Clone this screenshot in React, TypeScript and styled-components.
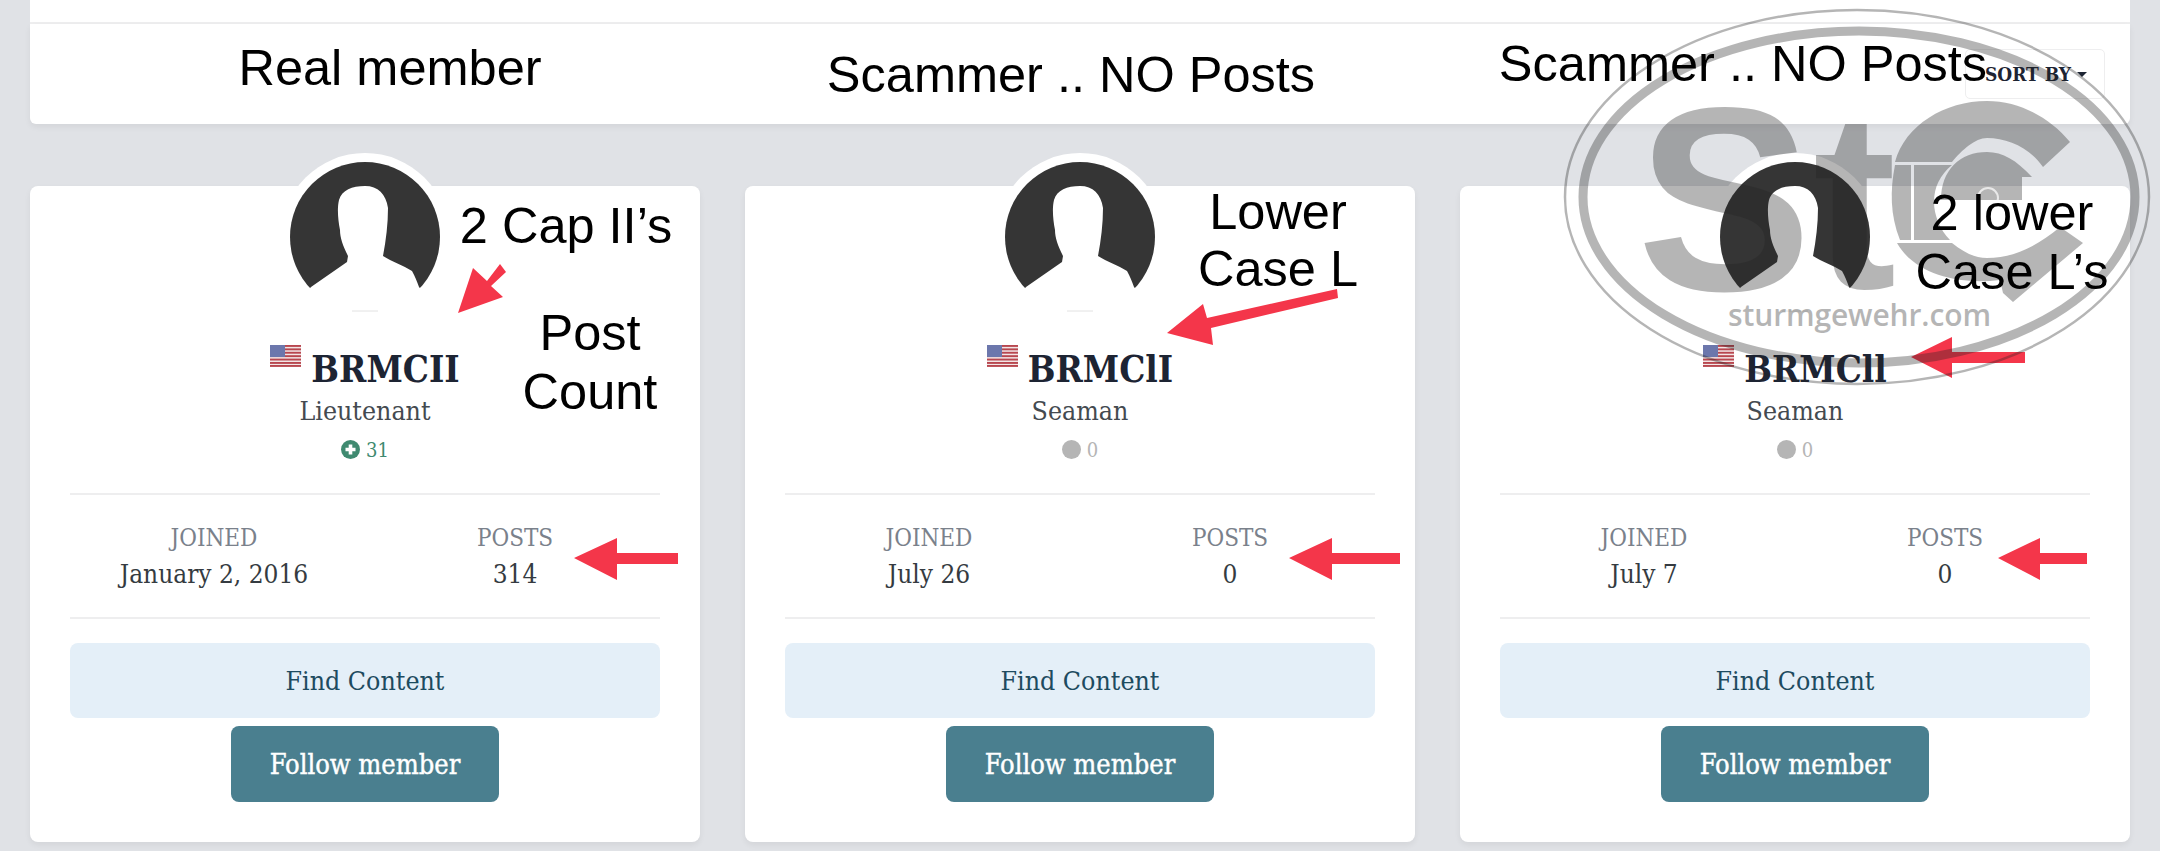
import React from "react";
import styled, { createGlobalStyle } from "styled-components";

const Global = createGlobalStyle`
  html, body { margin: 0; padding: 0; background: #e0e2e6; }
  body { font-family: "DejaVu Serif Condensed", "DejaVu Serif", "Liberation Serif", serif; font-stretch: condensed; }
`;

const Page = styled.div`
  position: relative;
  width: 2160px;
  height: 851px;
  overflow: hidden;
  padding: 0 30px;
  box-sizing: border-box;
`;
const TopStrip = styled.div`
  height: 22px;
  background: #fff;
  border-bottom: 2px solid #eeeeef;
`;
const Toolbar = styled.div`
  height: 100px;
  background: #fff;
  border-radius: 0 0 6px 6px;
  box-shadow: 0 3px 6px rgba(0, 0, 0, 0.06);
  display: flex;
  align-items: center;
  justify-content: flex-end;
  padding-right: 25px;
`;
const SortButton = styled.div`
  width: 140px;
  height: 50px;
  box-sizing: border-box;
  border: 1px solid #eeeeef;
  border-radius: 5px;
  display: flex;
  align-items: center;
  justify-content: center;
  gap: 6px;
  padding-left: 2px;
  font-size: 19px;
  font-weight: 700;
  color: #1d2433;
`;
const Caret = styled.span`
  width: 0;
  height: 0;
  border-left: 5px solid transparent;
  border-right: 5px solid transparent;
  border-top: 5px solid #1d2433;
`;
const Grid = styled.div`
  display: grid;
  grid-template-columns: repeat(3, 670px);
  gap: 45px;
  margin-top: 62px;
`;
const Card = styled.div`
  background: #fff;
  border-radius: 8px;
  box-shadow: 0 3px 6px rgba(0, 0, 0, 0.06);
  padding: 0 40px 40px;
  display: flex;
  flex-direction: column;
  align-items: center;
  height: 656px;
  box-sizing: border-box;
`;
const AvatarFrame = styled.div`
  width: 168px;
  height: 168px;
  margin-top: -33px;
  border-radius: 50%;
  background: #fff;
  display: flex;
  align-items: center;
  justify-content: center;
  flex: none;
`;
const NameRow = styled.div`
  display: flex;
  align-items: flex-start;
  gap: 10px;
  margin-top: 19px;
  height: 53px;
`;
const Flag = styled.svg`
  width: 31px;
  height: 22px;
  margin-top: 5px;
  flex: none;
`;
const Name = styled.div`
  font-size: 36.5px;
  line-height: 59px;
  font-weight: 700;
  color: #1d2433;
`;
const Rank = styled.div`
  font-size: 26.5px;
  line-height: 36px;
  color: #444a50;
`;
const Rep = styled.div<{ $active: boolean }>`
  display: flex;
  align-items: center;
  gap: 6px;
  margin-top: 6px;
  height: 30px;
  font-size: 20px;
  color: ${(p) => (p.$active ? "#3f8a70" : "#b5b5b5")};
`;
const RepIcon = styled.svg`
  width: 19px;
  height: 19px;
`;
const Stats = styled.div`
  align-self: stretch;
  margin-top: 28px;
  border-top: 2px solid #eeeeef;
  border-bottom: 2px solid #eeeeef;
  height: 126px;
  box-sizing: border-box;
  padding: 25px 0 0 44px;
  display: grid;
  grid-template-columns: 200px 200px;
  gap: 101px;
`;
const Stat = styled.div`
  text-align: center;
`;
const StatLabel = styled.div`
  font-size: 24px;
  line-height: 36px;
  color: #7a818b;
`;
const StatValue = styled.div`
  font-size: 26px;
  line-height: 36px;
  color: #353b41;
`;
const FindButton = styled.div`
  align-self: stretch;
  height: 76px;
  margin-top: 24px;
  background: #e4eff8;
  border-radius: 8px;
  display: flex;
  align-items: center;
  justify-content: center;
  font-size: 26.5px;
  color: #1d4b60;
`;
const FollowButton = styled.div`
  width: 268px;
  height: 76px;
  margin-top: 8px;
  background: #4a7f8f;
  border-radius: 8px;
  display: flex;
  align-items: center;
  justify-content: center;
  font-size: 27px;
  -webkit-text-stroke: 0.4px #fff;
  color: #fff;
`;
const Overlay = styled.svg`
  position: absolute;
  left: 0;
  top: 0;
  width: 2160px;
  height: 851px;
  font-stretch: normal;
  pointer-events: none;
`;
const Note = styled.div<{ $x: number; $y: number; $lh?: number }>`
  position: absolute;
  left: ${(p) => p.$x}px;
  top: ${(p) => p.$y}px;
  transform: translateX(-50%);
  font-family: "Liberation Sans", Arial, sans-serif;
  font-stretch: normal;
  font-size: 50.5px;
  line-height: ${(p) => p.$lh ?? 52}px;
  color: #000;
  text-align: center;
  white-space: nowrap;
`;

const Avatar = () => (
  <svg width="150" height="150" viewBox="0 0 150 150">
    <circle cx="75" cy="75" r="75" fill="#353535" />
    <path
      d="M21 125 L57 100 L58 94 C53 84 50 76 50 68 C48 58 47 46 49 38 C52 28 62 24 75 24 C88 24 96 32 98 46 C98 62 96 78 93 94 C102 100 113 103 122 109 C125 114 127 120 129 125 L150 150 L0 150 Z"
      fill="#fff"
    />
    <path d="M62 149 H88" stroke="#e2e2e2" strokeWidth="1" />
  </svg>
);

const USFlag = () => (
  <Flag viewBox="0 0 31 22">
    <rect width="31" height="22" fill="#f2e6e6" />
    {[0, 3.4, 6.8, 10.2, 13.6, 17, 20].map((y) => (
      <rect key={y} y={y} width="31" height="1.9" fill="#b8474f" />
    ))}
    <rect width="15" height="12" fill="#3d4a8e" />
    <rect width="15" height="12" fill="#c7cce6" opacity="0.35" />
  </Flag>
);

type Member = { name: string; rank: string; rep: number; joined: string; posts: string };
const members: Member[] = [
  { name: "BRMCII", rank: "Lieutenant", rep: 31, joined: "January 2, 2016", posts: "314" },
  { name: "BRMClI", rank: "Seaman", rep: 0, joined: "July 26", posts: "0" },
  { name: "BRMCll", rank: "Seaman", rep: 0, joined: "July 7", posts: "0" },
];

const MemberCard = ({ m }: { m: Member }) => (
  <Card>
    <AvatarFrame>
      <Avatar />
    </AvatarFrame>
    <NameRow>
      <USFlag />
      <Name>{m.name}</Name>
    </NameRow>
    <Rank>{m.rank}</Rank>
    <Rep $active={m.rep > 0}>
      <RepIcon viewBox="0 0 19 19">
        {m.rep > 0 ? (
          <>
            <circle cx="9.5" cy="9.5" r="9.5" fill="#3f8a70" />
            <path d="M9.5 4.5v10M4.5 9.5h10" stroke="#fff" strokeWidth="3.6" />
          </>
        ) : (
          <circle cx="9.5" cy="9.5" r="9.5" fill="#b5b5b5" />
        )}
      </RepIcon>
      {m.rep}
    </Rep>
    <Stats>
      <Stat>
        <StatLabel>JOINED</StatLabel>
        <StatValue>{m.joined}</StatValue>
      </Stat>
      <Stat>
        <StatLabel>POSTS</StatLabel>
        <StatValue>{m.posts}</StatValue>
      </Stat>
    </Stats>
    <FindButton>Find Content</FindButton>
    <FollowButton>Follow member</FollowButton>
  </Card>
);

const red = "#f4364a";

export default function App() {
  return (
    <Page>
      <Global />
      <TopStrip />
      <Toolbar>
        <SortButton>
          SORT BY
          <Caret />
        </SortButton>
      </Toolbar>
      <Grid>
        {members.map((m) => (
          <MemberCard key={m.name} m={m} />
        ))}
      </Grid>

      <Overlay viewBox="0 0 2160 851">
        <g fill={red}>
          <polygon points="458,313 473,268 487,281 500,264 506,272 491,286 503,297" />
          <polygon points="574,558 617,538 617,553 678,553 678,564 617,564 617,580" />
          <polygon points="1289,558 1332,538 1332,553 1400,553 1400,564 1332,564 1332,580" />
          <polygon points="1998,558 2040,538 2040,553 2087,553 2087,564 2040,564 2040,580" />
          <polygon points="1167,333 1203,304 1207,318 1337,289 1338,298 1211,328 1213,345" />
          <polygon points="1911,357 1952,337 1952,352 2025,352 2025,363 1952,363 1952,378" />
        </g>
        <g opacity="0.33" fill="#222">
          <ellipse cx="1857" cy="197" rx="292" ry="187" fill="none" stroke="#222" strokeWidth="2.5" />
          <ellipse cx="1859" cy="197" rx="276" ry="166" fill="none" stroke="#222" strokeWidth="9" />
          <text x="1637" y="290" fontFamily="Liberation Sans" fontWeight="700" fontSize="262">S</text>
          <text x="1813" y="288" fontFamily="Liberation Sans" fontWeight="700" fontSize="250">t</text>
          <path d="M1895 162 C1905 125 1945 101 1987 101 C2020 101 2050 118 2070 142 L2043 167 C2030 148 2008 138 1987 138 C1975 138 1962 150 1952 162 Z" />
          <path d="M1911 165 L1911 240 L1900 240 C1890 215 1890 190 1895 165 Z" />
          <path d="M1914 165 L1952 165 C1940 175 1934 187 1934 202 C1934 215 1940 230 1950 240 L1914 240 Z" />
          <path d="M1941 200 C1941 170 1960 152 1987 152 C2003 152 2016 160 2032 177 L2022 177 L2022 200 Z" />
          <path d="M1897 243 L1952 243 C1965 253 1975 258 1987 258 C2012 258 2035 248 2060 227 L2083 243 L2013 302 L2003 293 L2000 280 C1960 285 1915 275 1897 243 Z" />
          <text x="1728" y="326" fontFamily="Open Sans" fontWeight="600" fontSize="30" textLength="263">sturmgewehr.com</text>
        </g>
        <circle cx="1988" cy="198" r="10" fill="none" stroke="#fff" strokeOpacity="0.7" strokeWidth="2" />
      </Overlay>

      <Note $x={390} $y={42}>Real member</Note>
      <Note $x={1071} $y={49}>Scammer .. NO Posts</Note>
      <Note $x={1743} $y={38}>Scammer .. NO Posts</Note>
      <Note $x={566} $y={200}>2 Cap II’s</Note>
      <Note $x={590} $y={303} $lh={59}>Post<br />Count</Note>
      <Note $x={1278} $y={183} $lh={57}>Lower<br />Case L</Note>
      <Note $x={2012} $y={183} $lh={59}>2 lower<br />Case L’s</Note>
    </Page>
  );
}
